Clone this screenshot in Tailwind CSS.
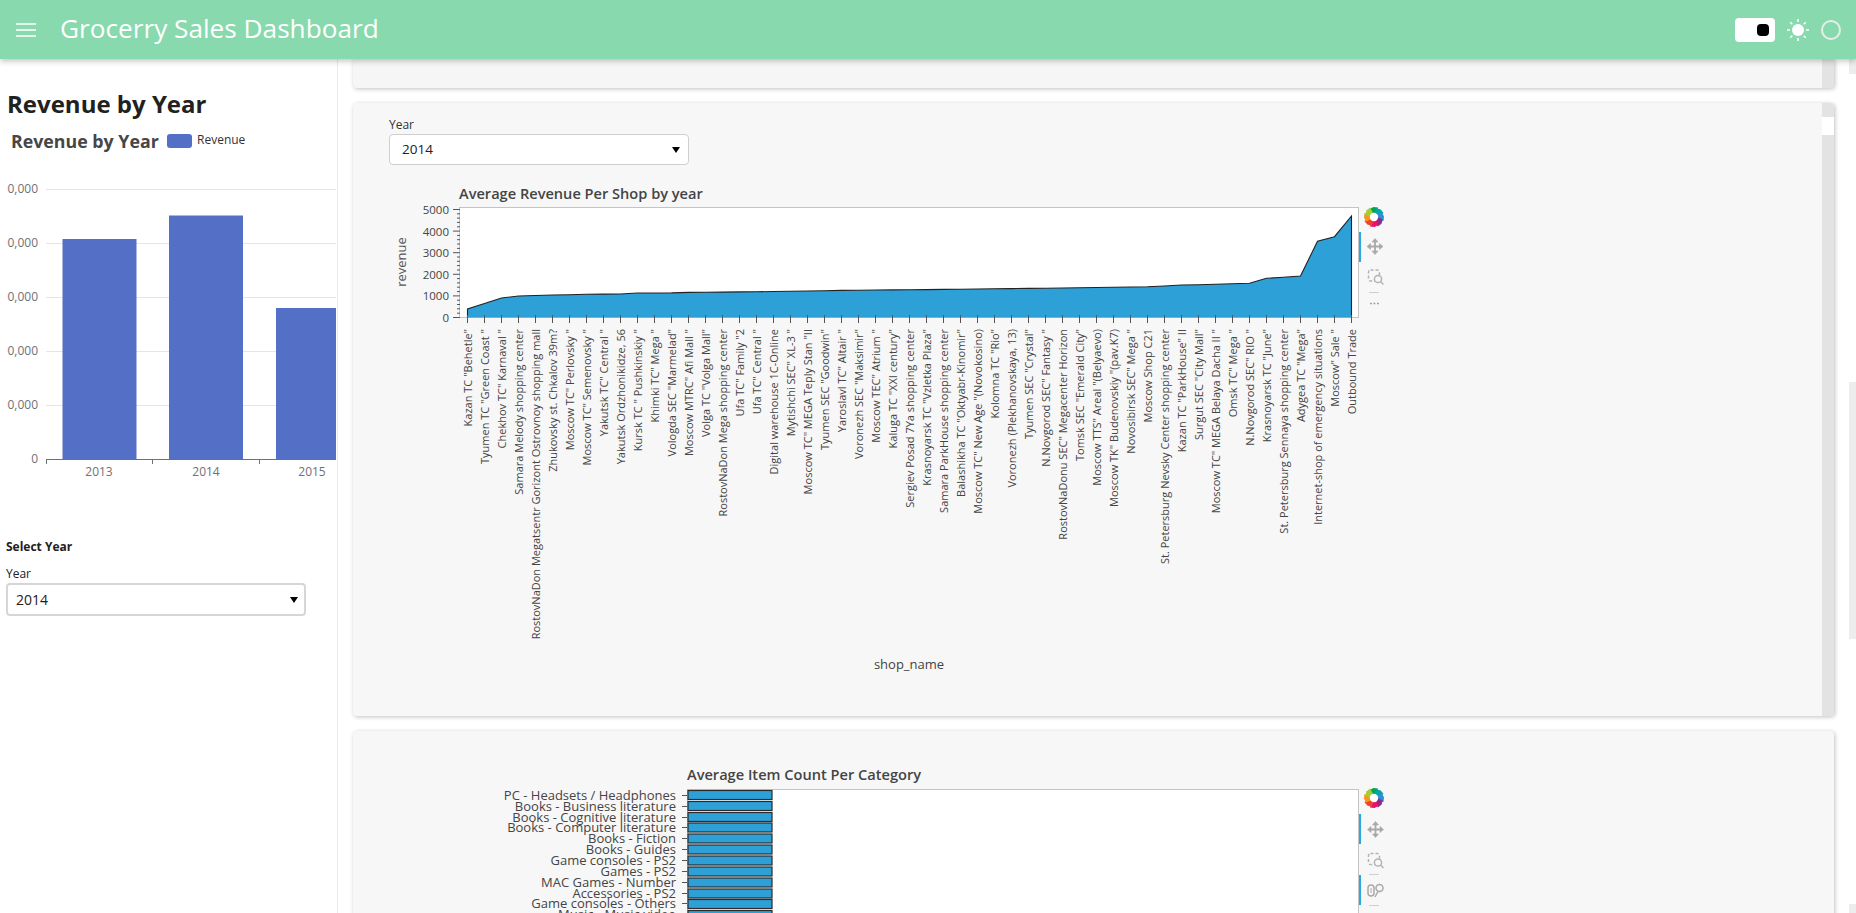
<!DOCTYPE html>
<html lang="en">
<head>
<meta charset="utf-8">
<title>Grocerry Sales Dashboard</title>
<script src="https://cdn.jsdelivr.net/npm/@tailwindcss/browser@4"></script>
</head>
<body class="m-0 bg-white font-['Open_Sans',sans-serif] text-[#212121]">
<div class="flex h-[913px] w-[1856px] flex-col overflow-hidden">
  <header class="relative z-10 flex h-[59px] shrink-0 items-center bg-[#88d9ae] shadow-[0_2px_6px_rgba(0,0,0,0.25)]">
    <svg class="ml-[16px] block" width="20" height="14" viewBox="0 0 20 14"><path d="M0 1h20M0 7h20M0 13h20" stroke="#fff" stroke-width="1.600"/></svg>
    <div class="mb-[3px] ml-[24px] text-[26.200px] leading-none text-white">Grocerry Sales Dashboard</div>
    <div class="ml-auto flex h-[24px] w-[40px] items-center justify-end rounded-[4px] bg-white pr-[6px]"><div class="h-[12px] w-[12px] rounded-[4px] bg-black"></div></div>
    <svg class="ml-[11px] block" width="24" height="24" viewBox="0 0 24 24"><circle cx="12" cy="12" r="6" fill="#fff"/><path d="M12 1v3M12 20v3M1 12h3M20 12h3M4.200 4.200l2.100 2.100M17.700 17.700l2.100 2.100M4.200 19.800l2.100-2.100M17.700 6.300l2.100-2.100" stroke="#fff" stroke-width="1.600"/></svg>
    <div class="ml-[11px] mr-[15px] h-[20px] w-[20px] rounded-full border-2 border-[#e6eee9]"></div>
  </header>
  <div class="flex min-h-0 flex-1">
    <aside class="w-[338px] shrink-0 border-r border-[#ebebeb]">
      <h1 class="ml-[7px] mt-[30px] text-[24px] font-bold leading-[30px] text-[#212121]">Revenue by Year</h1>
      <svg class="ml-[7px] block" width="329" height="360" viewBox="7 119 329 360">
        <text x="11" y="148" font-size="17.800" font-weight="700" fill="#464646" font-family="Open Sans">Revenue by Year</text>
        <rect x="167" y="134" width="25" height="14" rx="3" fill="#5470c6"/>
        <text x="197" y="144" font-size="12" fill="#333" font-family="Open Sans">Revenue</text>
        <path d="M46 189.500H336M46 243.500H336M46 297.500H336M46 351.500H336M46 405.500H336" stroke="#e0e6f1"/>
        <g font-size="12" fill="#6e7079" font-family="Open Sans" text-anchor="end">
          <text x="38" y="193">500,000</text><text x="38" y="247">400,000</text><text x="38" y="301">300,000</text><text x="38" y="355">200,000</text><text x="38" y="409">100,000</text><text x="38" y="463">0</text>
        </g>
        <rect x="62.500" y="239" width="74" height="220" fill="#5470c6"/>
        <rect x="169" y="215.500" width="74" height="244" fill="#5470c6"/>
        <rect x="276" y="308" width="74" height="151" fill="#5470c6"/>
        <path d="M46 459.500H336M46.500 459v5M152.500 459v5M259.500 459v5" stroke="#6e7079" fill="none"/>
        <g font-size="12" fill="#6e7079" font-family="Open Sans" text-anchor="middle">
          <text x="99" y="476">2013</text><text x="206" y="476">2014</text><text x="312" y="476">2015</text>
        </g>
      </svg>
      <div class="ml-[6px] mt-[60px] text-[12px] font-bold leading-[16px]">Select Year</div>
      <div class="ml-[6px] mt-[11px] text-[12px] leading-[16px]">Year</div>
      <div class="ml-[6px] mt-[1px] flex h-[33px] w-[300px] items-center justify-between rounded-[4px] border-2 border-[#d6d6d6] bg-white pl-[8px] pr-[6px] text-[14px]">
        <span>2014</span>
        <svg width="8" height="6" viewBox="0 0 8 6"><path d="M0 0h8L4 6z" fill="#000"/></svg>
      </div>
    </aside>
    <main class="flex min-w-0 flex-1 flex-col gap-[15px] overflow-hidden pl-[15px]">
      <section class="flex h-[29px] w-[1481px] shrink-0 justify-end rounded-b-[4px] bg-[#f6f6f6] shadow-[1px_1px_4px_rgba(0,0,0,0.25)]">
        <div class="w-[12px] rounded-br-[4px] bg-[#e3e3e3]"></div>
      </section>
      <section class="flex h-[613px] w-[1481px] shrink-0 rounded-[4px] bg-[#f7f7f7] shadow-[1px_1px_4px_rgba(0,0,0,0.25)]">
        <div class="min-w-0 flex-1 pl-[36px] pt-[14px]">
          <div class="text-[12px] leading-[16px] text-[#333]">Year</div>
          <div class="mt-[1px] flex h-[31px] w-[300px] items-center justify-between rounded-[4px] border border-[#cfcfcf] bg-white pl-[12px] pr-[8px] text-[13.500px] text-[#222]">
            <span>2014</span>
            <svg width="8" height="6" viewBox="0 0 8 6"><path d="M0 0h8L4 6z" fill="#000"/></svg>
          </div>
          <svg class="mt-[5px] block" width="1000" height="530" viewBox="389 170 1000 530" font-family="Open Sans">
            <text x="459" y="199" font-size="14.600" font-weight="600" fill="#444">Average Revenue Per Shop by year</text>
            <rect x="459.500" y="207.500" width="899" height="110" fill="#fff" stroke="#c4c4c4"/>
            <path d="M467.500 317.500V309L484.500 303.500L501.500 298L518.500 296L535.500 295.500L552.500 295L569.500 294.700L586.500 294.300L603.500 294.100L620.500 294L637.500 293L654.500 293L671.500 292.900L688.500 292.400L705.500 292.200L722.500 292.100L739.500 291.900L756.500 291.800L773.500 291.500L790.500 291.300L807.500 291L824.500 290.700L841.500 290.400L858.500 290.200L875.500 290L892.500 289.900L909.500 289.800L926.500 289.600L943.500 289.400L960.500 289.200L977.500 289L994.500 288.800L1011.500 288.600L1028.500 288.400L1045.500 288.200L1062.500 288L1079.500 287.800L1096.500 287.500L1113.500 287.200L1130.500 287L1147.500 286.800L1164.500 286L1181.500 285L1198.500 284.800L1215.500 284.300L1232.500 283.800L1249.500 283.300L1266.500 278.300L1283.500 277.300L1300.500 276L1317.500 241.300L1334.500 236.700L1351.500 216V317.500Z" fill="#2da0d8"/>
            <path d="M467.500 317.500V309L484.500 303.500L501.500 298L518.500 296L535.500 295.500L552.500 295L569.500 294.700L586.500 294.300L603.500 294.100L620.500 294L637.500 293L654.500 293L671.500 292.900L688.500 292.400L705.500 292.200L722.500 292.100L739.500 291.900L756.500 291.800L773.500 291.500L790.500 291.300L807.500 291L824.500 290.700L841.500 290.400L858.500 290.200L875.500 290L892.500 289.900L909.500 289.800L926.500 289.600L943.500 289.400L960.500 289.200L977.500 289L994.500 288.800L1011.500 288.600L1028.500 288.400L1045.500 288.200L1062.500 288L1079.500 287.800L1096.500 287.500L1113.500 287.200L1130.500 287L1147.500 286.800L1164.500 286L1181.500 285L1198.500 284.800L1215.500 284.300L1232.500 283.800L1249.500 283.300L1266.500 278.300L1283.500 277.300L1300.500 276L1317.500 241.300L1334.500 236.700L1351.500 216V317.500" fill="none" stroke="#222" stroke-width="1.100"/>
            <path d="M453 317.500h7M453 295.900h7M453 274.300h7M453 252.700h7M453 231.100h7M453 209.500h7M457 313.200h3M457 308.800h3M457 304.500h3M457 300.200h3M457 291.600h3M457 287.200h3M457 282.900h3M457 278.600h3M457 270h3M457 265.600h3M457 261.300h3M457 257h3M457 248.400h3M457 244h3M457 239.700h3M457 235.400h3M457 226.800h3M457 222.400h3M457 218.100h3M457 213.800h3" stroke="#555" fill="none"/>
            <g font-size="11.500" fill="#444" text-anchor="end"><text x="449" y="321.500">0</text><text x="449" y="300">1000</text><text x="449" y="278.500">2000</text><text x="449" y="257">3000</text><text x="449" y="235.500">4000</text><text x="449" y="214">5000</text></g>
            <text transform="rotate(-90 406 262)" x="406" y="262" font-size="13" fill="#555" text-anchor="middle">revenue</text>
            <path d="M467.500 315v8M484.500 315v8M501.500 315v8M518.500 315v8M535.500 315v8M552.500 315v8M569.500 315v8M586.500 315v8M603.500 315v8M620.500 315v8M637.500 315v8M654.500 315v8M671.500 315v8M688.500 315v8M705.500 315v8M722.500 315v8M739.500 315v8M756.500 315v8M773.500 315v8M790.500 315v8M807.500 315v8M824.500 315v8M841.500 315v8M858.500 315v8M875.500 315v8M892.500 315v8M909.500 315v8M926.500 315v8M943.500 315v8M960.500 315v8M977.500 315v8M994.500 315v8M1011.500 315v8M1028.500 315v8M1045.500 315v8M1062.500 315v8M1079.500 315v8M1096.500 315v8M1113.500 315v8M1130.500 315v8M1147.500 315v8M1164.500 315v8M1181.500 315v8M1198.500 315v8M1215.500 315v8M1232.500 315v8M1249.500 315v8M1266.500 315v8M1283.500 315v8M1300.500 315v8M1317.500 315v8M1334.500 315v8M1351.500 315v8" stroke="#555" fill="none"/>
            <g font-size="11" fill="#444" text-anchor="end">
              <text transform="rotate(-90 472 329)" x="472" y="329">Kazan TC "Behetle"</text>
              <text transform="rotate(-90 489 329)" x="489" y="329">Tyumen TC "Green Coast "</text>
              <text transform="rotate(-90 506 329)" x="506" y="329">Chekhov TC" Karnaval "</text>
              <text transform="rotate(-90 523 329)" x="523" y="329">Samara Melody shopping center</text>
              <text transform="rotate(-90 540 329)" x="540" y="329">RostovNaDon Megatsentr Gorizont Ostrovnoy shopping mall</text>
              <text transform="rotate(-90 557 329)" x="557" y="329">Zhukovsky st. Chkalov 39m?</text>
              <text transform="rotate(-90 574 329)" x="574" y="329">Moscow TC" Perlovsky "</text>
              <text transform="rotate(-90 591 329)" x="591" y="329">Moscow TC" Semenovsky "</text>
              <text transform="rotate(-90 608 329)" x="608" y="329">Yakutsk TC" Central "</text>
              <text transform="rotate(-90 625 329)" x="625" y="329">Yakutsk Ordzhonikidze, 56</text>
              <text transform="rotate(-90 642 329)" x="642" y="329">Kursk TC " Pushkinskiy "</text>
              <text transform="rotate(-90 659 329)" x="659" y="329">Khimki TC" Mega "</text>
              <text transform="rotate(-90 676 329)" x="676" y="329">Vologda SEC "Marmelad"</text>
              <text transform="rotate(-90 693 329)" x="693" y="329">Moscow MTRC" Afi Mall "</text>
              <text transform="rotate(-90 710 329)" x="710" y="329">Volga TC "Volga Mall"</text>
              <text transform="rotate(-90 727 329)" x="727" y="329">RostovNaDon Mega shopping center</text>
              <text transform="rotate(-90 744 329)" x="744" y="329">Ufa TC" Family "2</text>
              <text transform="rotate(-90 761 329)" x="761" y="329">Ufa TC" Central "</text>
              <text transform="rotate(-90 778 329)" x="778" y="329">Digital warehouse 1C-Online</text>
              <text transform="rotate(-90 795 329)" x="795" y="329">Mytishchi SEC" XL-3 "</text>
              <text transform="rotate(-90 812 329)" x="812" y="329">Moscow TC" MEGA Teply Stan "II</text>
              <text transform="rotate(-90 829 329)" x="829" y="329">Tyumen SEC "Goodwin"</text>
              <text transform="rotate(-90 846 329)" x="846" y="329">Yaroslavl TC" Altair "</text>
              <text transform="rotate(-90 863 329)" x="863" y="329">Voronezh SEC "Maksimir"</text>
              <text transform="rotate(-90 880 329)" x="880" y="329">Moscow TEC" Atrium "</text>
              <text transform="rotate(-90 897 329)" x="897" y="329">Kaluga TC "XXI century"</text>
              <text transform="rotate(-90 914 329)" x="914" y="329">Sergiev Posad 7Ya shopping center</text>
              <text transform="rotate(-90 931 329)" x="931" y="329">Krasnoyarsk TC "Vzletka Plaza"</text>
              <text transform="rotate(-90 948 329)" x="948" y="329">Samara ParkHouse shopping center</text>
              <text transform="rotate(-90 965 329)" x="965" y="329">Balashikha TC "Oktyabr-Kinomir"</text>
              <text transform="rotate(-90 982 329)" x="982" y="329">Moscow TC" New Age "(Novokosino)</text>
              <text transform="rotate(-90 999 329)" x="999" y="329">Kolomna TC "Rio"</text>
              <text transform="rotate(-90 1016 329)" x="1016" y="329">Voronezh (Plekhanovskaya, 13)</text>
              <text transform="rotate(-90 1033 329)" x="1033" y="329">Tyumen SEC "Crystal"</text>
              <text transform="rotate(-90 1050 329)" x="1050" y="329">N.Novgorod SEC" Fantasy "</text>
              <text transform="rotate(-90 1067 329)" x="1067" y="329">RostovNaDonu SEC" Megacenter Horizon</text>
              <text transform="rotate(-90 1084 329)" x="1084" y="329">Tomsk SEC "Emerald City"</text>
              <text transform="rotate(-90 1101 329)" x="1101" y="329">Moscow TTS" Areal "(Belyaevo)</text>
              <text transform="rotate(-90 1118 329)" x="1118" y="329">Moscow TK" Budenovskiy "(pav.K7)</text>
              <text transform="rotate(-90 1135 329)" x="1135" y="329">Novosibirsk SEC" Mega "</text>
              <text transform="rotate(-90 1152 329)" x="1152" y="329">Moscow Shop C21</text>
              <text transform="rotate(-90 1169 329)" x="1169" y="329">St. Petersburg Nevsky Center shopping center</text>
              <text transform="rotate(-90 1186 329)" x="1186" y="329">Kazan TC "ParkHouse" II</text>
              <text transform="rotate(-90 1203 329)" x="1203" y="329">Surgut SEC "City Mall"</text>
              <text transform="rotate(-90 1220 329)" x="1220" y="329">Moscow TC" MEGA Belaya Dacha II "</text>
              <text transform="rotate(-90 1237 329)" x="1237" y="329">Omsk TC" Mega "</text>
              <text transform="rotate(-90 1254 329)" x="1254" y="329">N.Novgorod SEC" RIO "</text>
              <text transform="rotate(-90 1271 329)" x="1271" y="329">Krasnoyarsk TC "June"</text>
              <text transform="rotate(-90 1288 329)" x="1288" y="329">St. Petersburg Sennaya shopping center</text>
              <text transform="rotate(-90 1305 329)" x="1305" y="329">Adygea TC "Mega"</text>
              <text transform="rotate(-90 1322 329)" x="1322" y="329">Internet-shop of emergency situations</text>
              <text transform="rotate(-90 1339 329)" x="1339" y="329">Moscow" Sale "</text>
              <text transform="rotate(-90 1356 329)" x="1356" y="329">Outbound Trade</text>
            </g>
            <text x="909" y="669" font-size="13" fill="#444" text-anchor="middle">shop_name</text>
            <rect x="1359" y="232" width="2" height="30" fill="#26aae1"/>
            <g transform="translate(1374 217)">
              <path d="M-2.500-3L2-3L4-9.500L-.5-10L-4.500-8Z" fill="#00a651"/>
              <path d="M-2.500-3L2-3L4-9.500L-.5-10L-4.500-8Z" fill="#00a6a6" transform="rotate(45)"/>
              <path d="M-2.500-3L2-3L4-9.500L-.5-10L-4.500-8Z" fill="#2b8fd9" transform="rotate(90)"/>
              <path d="M-2.500-3L2-3L4-9.500L-.5-10L-4.500-8Z" fill="#8e2a8b" transform="rotate(135)"/>
              <path d="M-2.500-3L2-3L4-9.500L-.5-10L-4.500-8Z" fill="#e9116e" transform="rotate(180)"/>
              <path d="M-2.500-3L2-3L4-9.500L-.5-10L-4.500-8Z" fill="#f0412e" transform="rotate(225)"/>
              <path d="M-2.500-3L2-3L4-9.500L-.5-10L-4.500-8Z" fill="#f8961d" transform="rotate(270)"/>
              <path d="M-2.500-3L2-3L4-9.500L-.5-10L-4.500-8Z" fill="#a5cd39" transform="rotate(315)"/>
              <circle r="4.200" fill="#fff"/>
            </g>
            <g transform="translate(1375 246.500)" stroke="#a9a9a9" fill="#a9a9a9" stroke-width="1.800">
              <path d="M-5 0H5M0-5V5" fill="none"/>
              <path d="M0-8L-3-4.500H3ZM0 8L-3 4.500H3ZM-8 0L-4.500-3V3ZM8 0L4.500-3V3Z" stroke-width=".6"/>
            </g>
            <g fill="none" stroke="#b3b3b3" stroke-width="1.500">
              <rect x="1368.500" y="270" width="11" height="11" rx="2" stroke-dasharray="3 2"/>
              <circle cx="1378" cy="279" r="3.600" fill="#f7f7f7"/>
              <path d="M1380.500 281.500l3 3"/>
            </g>
            <path d="M1369 292.500h10" stroke="#cfcfcf" fill="none"/>
            <path d="M1370 303.500h1.800M1373.500 303.500h1.800M1377 303.500h1.800" stroke="#999" stroke-width="1.300" fill="none"/>
          </svg>
        </div>
        <div class="w-[12px] rounded-r-[4px] bg-[#e3e3e3] pt-[14px]"><div class="h-[18px] bg-white"></div></div>
      </section>
      <section class="h-[300px] w-[1481px] shrink-0 rounded-[4px] bg-[#f7f7f7] pt-[34px] shadow-[1px_1px_4px_rgba(0,0,0,0.25)]">
        <svg class="block" width="1040" height="200" viewBox="353 765 1040 200" font-family="Open Sans">
          <text x="687" y="780" font-size="14.600" font-weight="600" fill="#444">Average Item Count Per Category</text>
          <rect x="687.500" y="789.500" width="671" height="200" fill="#fff" stroke="#c4c4c4"/>
          <g fill="#2da0d8" stroke="#2b2b2b" stroke-width="1.200">
            <rect x="688" y="790.500" width="84" height="9"/><rect x="688" y="801.500" width="84" height="9"/><rect x="688" y="812.500" width="84" height="9"/><rect x="688" y="823" width="84" height="9"/><rect x="688" y="834" width="84" height="9"/><rect x="688" y="845" width="84" height="9"/><rect x="688" y="856" width="84" height="9"/><rect x="688" y="867" width="84" height="9"/><rect x="688" y="878" width="84" height="9"/><rect x="688" y="889" width="84" height="9"/><rect x="688" y="899.500" width="84" height="9"/><rect x="688" y="910.500" width="84" height="9"/>
          </g>
          <path d="M682 795.500h5M682 806.500h5M682 817.500h5M682 827.500h5M682 838.500h5M682 849.500h5M682 860.500h5M682 871.500h5M682 882.500h5M682 893.500h5M682 903.500h5M682 914.500h5" stroke="#555" fill="none"/>
          <g font-size="13" fill="#444" text-anchor="end">
            <text x="676" y="800">PC - Headsets / Headphones</text>
            <text x="676" y="811">Books - Business literature</text>
            <text x="676" y="822">Books - Cognitive literature</text>
            <text x="676" y="832">Books - Computer literature</text>
            <text x="676" y="843">Books - Fiction</text>
            <text x="676" y="854">Books - Guides</text>
            <text x="676" y="865">Game consoles - PS2</text>
            <text x="676" y="876">Games - PS2</text>
            <text x="676" y="887">MAC Games - Number</text>
            <text x="676" y="898">Accessories - PS2</text>
            <text x="676" y="908">Game consoles - Others</text>
            <text x="676" y="919">Music - Music video</text>
          </g>
          <rect x="1359" y="814" width="2" height="30" fill="#26aae1"/>
          <rect x="1359" y="875" width="2" height="30" fill="#26aae1"/>
          <g transform="translate(1374 798)">
            <path d="M-2.500-3L2-3L4-9.500L-.5-10L-4.500-8Z" fill="#00a651"/>
            <path d="M-2.500-3L2-3L4-9.500L-.5-10L-4.500-8Z" fill="#00a6a6" transform="rotate(45)"/>
            <path d="M-2.500-3L2-3L4-9.500L-.5-10L-4.500-8Z" fill="#2b8fd9" transform="rotate(90)"/>
            <path d="M-2.500-3L2-3L4-9.500L-.5-10L-4.500-8Z" fill="#8e2a8b" transform="rotate(135)"/>
            <path d="M-2.500-3L2-3L4-9.500L-.5-10L-4.500-8Z" fill="#e9116e" transform="rotate(180)"/>
            <path d="M-2.500-3L2-3L4-9.500L-.5-10L-4.500-8Z" fill="#f0412e" transform="rotate(225)"/>
            <path d="M-2.500-3L2-3L4-9.500L-.5-10L-4.500-8Z" fill="#f8961d" transform="rotate(270)"/>
            <path d="M-2.500-3L2-3L4-9.500L-.5-10L-4.500-8Z" fill="#a5cd39" transform="rotate(315)"/>
            <circle r="4.200" fill="#fff"/>
          </g>
          <g transform="translate(1375.500 829.500)" stroke="#a9a9a9" fill="#a9a9a9" stroke-width="1.800">
            <path d="M-5 0H5M0-5V5" fill="none"/>
            <path d="M0-8L-3-4.500H3ZM0 8L-3 4.500H3ZM-8 0L-4.500-3V3ZM8 0L4.500-3V3Z" stroke-width=".6"/>
          </g>
          <g fill="none" stroke="#b3b3b3" stroke-width="1.500">
            <rect x="1368.500" y="853.500" width="11" height="11" rx="2" stroke-dasharray="3 2"/>
            <circle cx="1378" cy="862.500" r="3.600" fill="#f7f7f7"/>
            <path d="M1380.500 865l3 3"/>
          </g>
          <path d="M1369 874.500h10" stroke="#cfcfcf" fill="none"/>
          <g fill="none" stroke="#a9a9a9" stroke-width="1.500">
            <rect x="1368" y="885" width="6" height="11" rx="3"/>
            <path d="M1371 888v5" stroke-width="1"/>
            <circle cx="1379.500" cy="888" r="3.500"/>
            <path d="M1378 891.500l-3 5.500"/>
          </g>
          <path d="M1369 905.500h10" stroke="#cfcfcf" fill="none"/>
        </svg>
      </section>
    </main>
    <div class="ml-auto flex w-[7px] shrink-0 flex-col">
      <div class="h-[15px] bg-[#ededed]"></div>
      <div class="mt-[308px] h-[257px] bg-[#ededed]"></div>
      <div class="mt-[265px] h-[9px] bg-[#ededed]"></div>
    </div>
  </div>
</div>
</body>
</html>
